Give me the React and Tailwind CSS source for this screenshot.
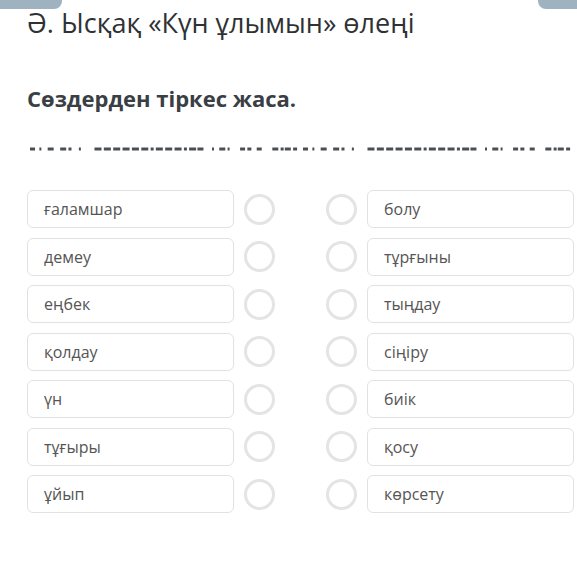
const left = ['ғаламшар', 'демеу', 'еңбек', 'қолдау', 'үн', 'тұғыры', 'ұйып']
const right = ['болу', 'тұрғыны', 'тыңдау', 'сіңіру', 'биік', 'қосу', 'көрсету']

// broken dash run under the task text (looks like a garbled line in the original)
const dashes = [
  [0, 5], [9, 2], [17, 6], [29, 6], [37, 3], [47, 2],
  [62, 7], [71, 7], [80, 7], [89, 7], [98, 7], [107, 7], [116, 3], [121, 7], [130, 7],
  [139, 7], [148, 3], [153, 7], [161, 6], [175, 2], [182, 6], [190, 2],
  [202, 5], [209, 4], [218, 5], [233, 6], [241, 3], [245, 6], [253, 4],
]

const Dashes = () => (
  <svg width="545" height="4" className="block">
    {[0, 273].map((off) =>
      dashes.map(([x, w], i) => (
        <rect key={off + '-' + i} x={off + x * 1.04} y="0.5" width={w} height="3" fill="#4a4f55" />
      ))
    )}
  </svg>
)

const Word = ({ text }) => (
  <div className="h-[38px] w-[207px] rounded-[6px] border border-[#e2e2e2] bg-white flex items-center pl-[16px] text-[16px] text-[#555]">
    {text}
  </div>
)

const Circle = () => <div className="w-[31px] h-[31px] rounded-full border-[3px] border-[#e4e4e4]" />

export default function App() {
  return (
    <div className="relative w-[577px] h-[562px] bg-white overflow-hidden" style={{ fontFamily: '"Open Sans", sans-serif' }}>
      <div className="absolute left-0 top-0 w-[62px] h-[9px] bg-[#9fb2bf] rounded-br-[8px]" />
      <div className="absolute right-0 top-0 w-[39px] h-[9px] bg-[#9fb2bf] rounded-bl-[8px]" />

      <div className="pl-[27px] pt-[4px]">
        <h1 className="text-[27px] leading-[37px] text-[#2f3235]">Ә. Ысқақ «Күн ұлымын» өлеңі</h1>
        <h2 className="mt-[42px] text-[22px] leading-[30px] font-bold text-[#3a3f45]">Сөздерден тіркес жаса.</h2>
        <div className="mt-[34px] pl-[3px]">
          <Dashes />
        </div>

        <div className="mt-[39px] flex flex-col gap-[9.5px]">
          {left.map((w, i) => (
            <div key={i} className="flex items-center">
              <Word text={w} />
              <div className="ml-[10px]"><Circle /></div>
              <div className="ml-[51px]"><Circle /></div>
              <div className="ml-[10px]"><Word text={right[i]} /></div>
            </div>
          ))}
        </div>
      </div>
    </div>
  )
}
